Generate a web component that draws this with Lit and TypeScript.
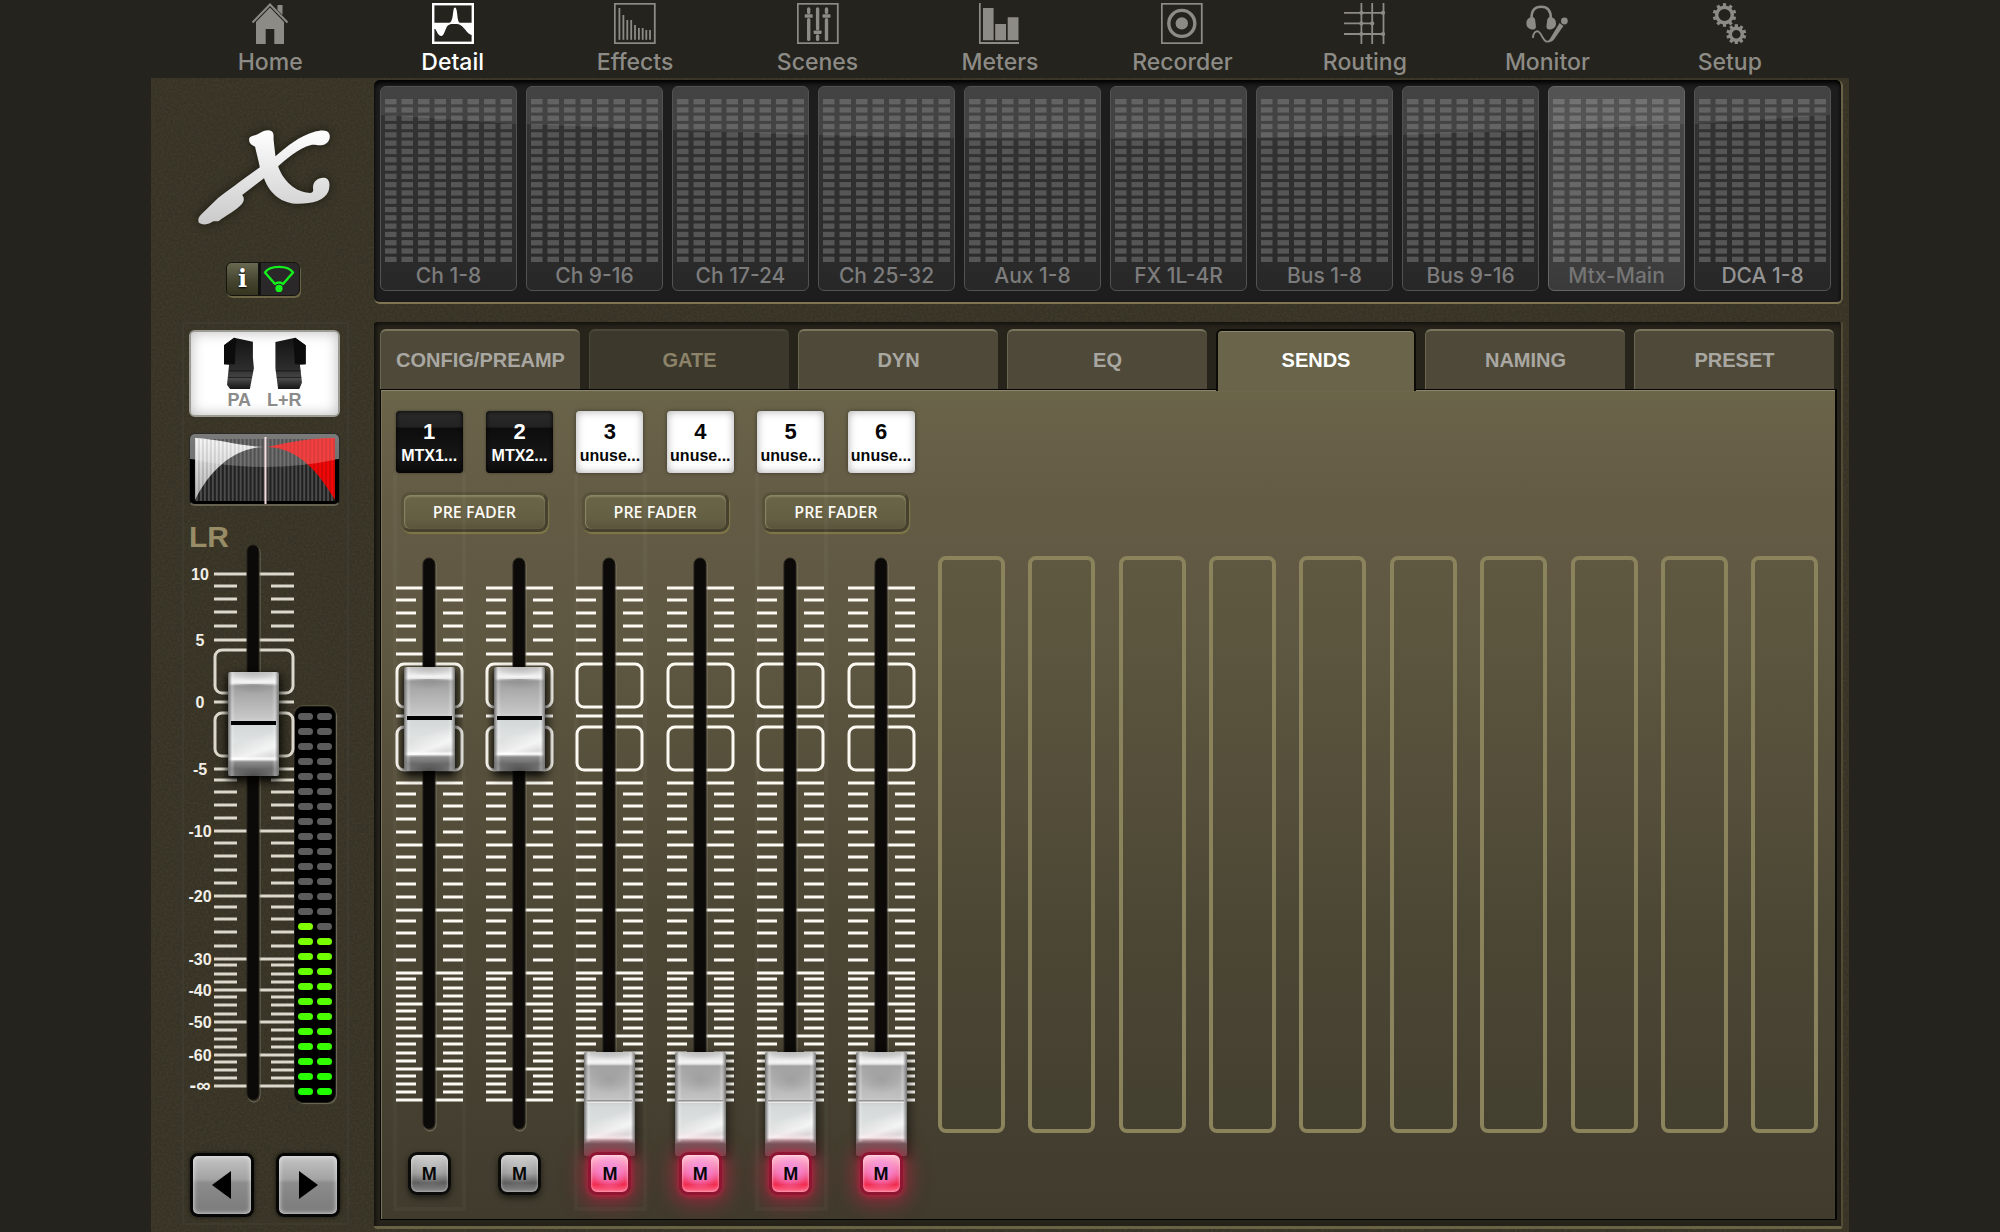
import { LitElement, html, css, svg, nothing } from "lit";
import { customElement, property, state } from "lit/decorators.js";
import { classMap } from "lit/directives/class-map.js";
import { styleMap } from "lit/directives/style-map.js";

/* ---------- data ---------- */

const NAV = ["Home", "Detail", "Effects", "Scenes", "Meters", "Recorder", "Routing", "Monitor", "Setup"];

const BANKS = [
  "Ch 1-8", "Ch 9-16", "Ch 17-24", "Ch 25-32", "Aux 1-8",
  "FX 1L-4R", "Bus 1-8", "Bus 9-16", "Mtx-Main", "DCA 1-8",
];

const TABS = ["CONFIG/PREAMP", "GATE", "DYN", "EQ", "SENDS", "NAMING", "PRESET"];

interface Send {
  id: number;
  name: string;
  dark: boolean;
  level: number;
  muted: boolean;
}

const SENDS: Send[] = [
  { id: 1, name: "MTX1...", dark: true, level: 74.6, muted: false },
  { id: 2, name: "MTX2...", dark: true, level: 74.6, muted: false },
  { id: 3, name: "unuse...", dark: false, level: 0, muted: true },
  { id: 4, name: "unuse...", dark: false, level: 0, muted: true },
  { id: 5, name: "unuse...", dark: false, level: 0, muted: true },
  { id: 6, name: "unuse...", dark: false, level: 0, muted: true },
];

const EMPTY_SLOTS = 10;

/* Scale marks, in pixels below the +10 dB mark. */
const MAJOR: [number, string][] = [
  [0, "10"], [66, "5"], [128, "0"], [195, "-5"], [257, "-10"], [322, "-20"],
  [385, "-30"], [416, "-40"], [448, "-50"], [481, "-60"], [512, "-∞"],
];
const MINOR = [
  12, 25, 38, 52, 206, 218, 231, 244, 269, 282, 296, 309, 333, 345, 358, 372,
  391, 400, 408, 423, 431, 440, 456, 465, 473, 488, 496, 504,
];

/* ---------- icons ---------- */

const gear = (cx: number, cy: number, r: number) => svg`
  <circle cx=${cx} cy=${cy} r=${r} fill="none" stroke="currentColor" stroke-width="3.4"/>
  ${Array.from({ length: 10 }, (_, i) => svg`
    <rect x=${cx - 1.6} y=${cy - r - 4} width="3.2" height="4" fill="currentColor"
      transform="rotate(${i * 36} ${cx} ${cy})"/>`)}
`;

const frame = svg`<rect x="0.8" y="0.8" width="40" height="39.4" fill="none" stroke="currentColor" stroke-width="1.8"/>`;

const ICONS: Record<string, unknown> = {
  Home: svg`
    <path d="M3.5 19.5 21 1.5 38.5 19.5" fill="none" stroke="currentColor" stroke-width="2"/>
    <path d="M28.5 2H33.5V12L28.5 7Z" fill="currentColor"/>
    <path d="M21 4.5 35 19V41H25.3V26H16.7V41H7V19Z" fill="currentColor"/>`,
  Detail: svg`
    <rect x="1.2" y="1.2" width="39.6" height="38.6" fill="none" stroke="currentColor" stroke-width="2.4"/>
    <path d="M2 19.8H17.5C20 19 20.6 14 21.2 9 21.6 6 22 4.6 23 4.6 24.2 4.6 24.8 7 25.2 11 25.8 17 26.4 19.6 28 19.8H40V32C35 31 33 25 29 22.5 27.5 21.4 26 21 23 21 20 21 17 20.5 15 23.5 13 27 12 33 9.2 33 6.4 33 5 29 3.4 26H2Z" fill="currentColor"/>`,
  Effects: svg`${frame}
    ${[[5.4, 5], [9.4, 12], [13.3, 17], [17.2, 17], [21, 22], [24.9, 25], [28.7, 25], [32.3, 27], [36, 27]].map(
      ([x, y]) => svg`<path d="M${x} ${y}V36.8" stroke="currentColor" stroke-width="1.8"/>`)}`,
  Scenes: svg`${frame}
    ${[[11.7, 13], [20.6, 29.3], [29.5, 13]].map(([x, y]) => svg`
      <path d="M${x} 6V${y - 3.6}M${x} ${y + 3.6}V36.4" stroke="currentColor" stroke-width="3.4" stroke-linecap="round"/>
      <rect x=${x - 4} y=${y - 1.8} width="8" height="3.6" rx="0.8" fill="currentColor"/>`)}`,
  Meters: svg`
    <path d="M0.8 0V40H40" fill="none" stroke="currentColor" stroke-width="1.8"/>
    <path d="M4 5H14.6V37.3H4ZM16.2 21H27V37.3H16.2ZM28.7 14.3H39.5V37.3H28.7Z" fill="currentColor"/>`,
  Recorder: svg`${frame}
    <circle cx="20.8" cy="20.4" r="13" fill="none" stroke="currentColor" stroke-width="3.4"/>
    <circle cx="20.8" cy="20.4" r="6.2" fill="currentColor"/>`,
  Routing: svg`
    <path d="M17.4 0V41M28.2 0V41M39.5 0V41M0 9.8H41M0 20.4H30M0 31H41" stroke="currentColor" stroke-width="1.8"/>
    ${[[17.4, 9.8], [39, 9.8], [17.4, 20.4], [28.2, 20.4], [17.4, 31], [39, 31]].map(
      ([x, y]) => svg`<circle cx=${x} cy=${y} r="2.1" fill="currentColor"/>`)}`,
  Monitor: svg`
    <path d="M5.5 15C5.5 7 9 3.8 15.2 3.8 21.4 3.8 24.8 7 24.8 15" fill="none" stroke="currentColor" stroke-width="2.6"/>
    <path d="M7.2 14C2 14 0.4 17 0.4 20.4 0.4 24 3 26.4 7 26.4 9.4 26.4 10.4 25 9.8 22L9 16Z" fill="currentColor"/>
    <path d="M23.2 14C28.4 14 30 17 30 20.4 30 24 27.4 26.4 23.4 26.4 21 26.4 20 25 20.6 22L21.4 16Z" fill="currentColor"/>
    <circle cx="38.4" cy="18" r="3.4" fill="currentColor"/>
    <path d="M33.6 20 37.4 23 28 36.4C26.6 38.4 24.4 39 22 39Z" fill="currentColor"/>
    <path d="M25 37C21 40.6 18.6 38 16.4 34 14 29 11.4 26.6 8.6 29.6 7 31.4 7 33 7 35" fill="none" stroke="currentColor" stroke-width="1.8"/>`,
  Setup: svg`${gear(15.5, 12, 7.8)}${gear(27.3, 31.2, 6)}`,
};

/* Meter block grid used by each layer button. */
const meterGrid = html`
  <svg class="grid" viewBox="0 0 127 163" preserveAspectRatio="none" aria-hidden="true">
    ${Array.from({ length: 160 }, (_, n) => svg`
      <rect x=${(n % 8) * 16.5} y=${Math.floor(n / 8) * 8.3} width="11.5" height="5.3"/>`)}
  </svg>`;

/* ---------- fader ---------- */

@customElement("level-fader")
class LevelFader extends LitElement {
  @property({ type: Number }) level = 0;
  @property() label = "";
  @property({ type: Boolean }) main = false;

  static styles = css`
    :host { display: block; position: relative; }
    svg { display: block; overflow: visible; }
    .mark { stroke: #fbf9f2; stroke-width: 3; fill: none; }
    .mark.soft { stroke: #dcd8cc; }
    .slot { fill: #0b0a08; stroke: #24211a; stroke-width: 1; }
    .edge { fill: none; stroke: #8d8873; stroke-width: 1; opacity: 0.7; }
    .num { font: bold 16px "Liberation Sans", Arial, sans-serif; fill: #f1efe8; text-anchor: middle; }
    .num.inf { font-size: 20px; }
    input {
      position: absolute; right: 8px; top: -22px;
      width: 51px; height: 620px; margin: 0; padding: 0;
      writing-mode: vertical-lr; direction: rtl;
      appearance: none; -webkit-appearance: none; background: none; outline-offset: 2px;
    }
    input.main { right: 15px; top: -23px; }
    input::-webkit-slider-runnable-track { background: none; width: 51px; }
    input::-webkit-slider-thumb {
      appearance: none; -webkit-appearance: none;
      width: 51px; height: 104px; border: 0; border-radius: 2px;
      background:
        linear-gradient(#000, #000) center 49px / 45px 4px no-repeat,
        linear-gradient(90deg, #6d6d6d, #ffffff40 8%, #fff0 14%, #fff0 86%, #ffffff40 92%, #757575) 0 0 / 100% 100% no-repeat,
        radial-gradient(ellipse 24px 10px at 50% 0, #8d8d8dcc, #8d8d8d00) 0 12px / 100% 16px no-repeat,
        radial-gradient(ellipse 26px 9px at 50% 0, #b9b9b9, #b9b9b900) 0 0 / 100% 12px no-repeat,
        radial-gradient(ellipse 22px 9px at 50% 100%, #4c4c4c, #4c4c4c00) 0 92px / 100% 12px no-repeat,
        linear-gradient(160deg, #ffffff00 40%, #ffffffb0 70%, #ffffff10 88%) 0 54px / 100% 34px no-repeat,
        linear-gradient(#c9c9c9 0, #f5f5f5 10px, #dedede 12px, #9c9c9c 14px, #a9a9a9 22px, #c4c4c4 44px, #cfcfcf 50px,
          #d3d8d8 54px, #dfe2e2 70px, #d6d6d6 84px, #fff 87px, #8c8c8c 90px, #6a6a6a 97px, #777 104px);
      box-shadow: 0 6px 10px #000a, 4px 2px 8px #0006, -2px 2px 5px #0005;
    }
    input.low::-webkit-slider-thumb {
      background:
        linear-gradient(#7d7d7d, #fff) center 48px / 45px 3px no-repeat,
        linear-gradient(90deg, #6d6d6d, #ffffff40 8%, #fff0 14%, #fff0 86%, #ffffff40 92%, #757575) 0 0 / 100% 90px no-repeat,
        radial-gradient(ellipse 22px 14px at 50% 40%, #94949499, #94949400) 0 14px / 100% 34px no-repeat,
        radial-gradient(ellipse 26px 8px at 50% 0, #b9b9b9, #b9b9b900) 0 0 / 100% 12px no-repeat,
        linear-gradient(160deg, #ffffff00 40%, #ffffffb0 70%, #ffffff10 88%) 0 52px / 100% 34px no-repeat,
        linear-gradient(#c9c9c9 0, #f5f5f5 10px, #e4e4e4 12px, #a2a2a2 14px, #adadad 24px, #c2c2c2 46px, #cdcdcd 50px,
          #d3d8d8 54px, #dcdfdf 70px, #d8d8d8 82px, #f6eef0 86px, #a18b90 89px, #6b5b5b 92px, #66504f 104px);
      box-shadow: 4px 2px 8px #0006, -2px 2px 5px #0004;
    }
  `;

  render() {
    const main = this.main;
    const left = main ? 25 : 0;
    const width = main ? 105 : 67;
    const height = main ? 556 : 572;
    const top = main ? 29 : 30;
    const short = main ? 23 : 20;
    const slot = main ? 58 : 27;
    const mark = classMap({ mark: true, soft: main });
    return html`
      <svg width=${width} height=${height} viewBox="0 0 ${width} ${height}" aria-hidden="true">
        ${MINOR.map((y) => svg`<path class=${mark}
          d="M${left} ${y + top}h${short}M${width - short} ${y + top}h${short}"/>`)}
        ${MAJOR.map(([y, text]) => svg`
          <path class=${mark} d="M${left} ${y + top}H${width}"/>
          ${main ? svg`<text class=${text === "-∞" ? "num inf" : "num"} x="11" y=${y + top + 6}>${text}</text>` : nothing}`)}
        ${[75, 138].map((y) => svg`<rect class=${mark} x=${left + 1} y=${y + top + 1} width=${width - left - 2}
          height="43" rx="7"/>`)}
        <rect class="edge" x=${slot + 1} y="1" width="12" height=${height} rx="6"/>
        <rect class="slot" x=${slot} y="0" width="12" height=${height - 1} rx="6"/>
      </svg>
      <input type="range" min="0" max="100" step="0.1" .value=${String(this.level)}
        aria-label=${this.label} aria-orientation="vertical"
        class=${classMap({ main, low: this.level < 1 })}>
    `;
  }
}

/* ---------- application ---------- */

@customElement("app-root")
class AppRoot extends LitElement {
  @state() private section = "Detail";
  @state() private bank = "Mtx-Main";
  @state() private tab = "SENDS";
  @state() private sends = SENDS;

  static styles = css`
    :host {
      --sans: "Liberation Sans", Arial, Helvetica, sans-serif;
      --ui: Inter, Roboto, sans-serif;
      --shell: #24231d;
      display: flex; flex-direction: column; box-sizing: border-box;
      min-height: 100vh; padding: 0 151px;
      background: var(--shell); font-family: var(--sans);
    }
    button { font-family: inherit; margin: 0; padding: 0; border: 0; cursor: pointer; }

    .nav { display: grid; grid-template-columns: repeat(9, 1fr); height: 78px; padding: 0 28px; }
    .nav button {
      display: flex; flex-direction: column; align-items: center; gap: 3px;
      padding-top: 3px; background: none; color: #8d8b86;
      font: 500 23px/30px var(--ui);
    }
    .nav button.on { color: #fff; }
    .nav svg { width: 42px; height: 41px; display: block; }

    .console {
      position: relative; flex: 1; display: grid; grid-template-columns: 223px 1fr;
      padding: 0 6px 3px 0; background: #363226;
    }
    .grain { position: absolute; inset: 0; width: 100%; height: 100%; opacity: 0.12; pointer-events: none; }

    /* sidebar */
    .side { position: relative; display: flex; flex-direction: column; align-items: flex-start; padding: 51px 25px 4px 31px; }
    .logo { width: 134px; height: 97px; margin-left: 15px; filter: drop-shadow(0 0 5px #0008); }
    .status {
      display: flex; height: 32px; width: 72px; margin: 36px 0 26px 44px; border: 1px solid #16140f; border-radius: 6px;
      background: #2b2829; box-shadow: 1px 2px 0 #6b6546; overflow: hidden;
    }
    .status button {
      width: 34px; background: linear-gradient(#686950, #43432e 60%, #34341f); color: #fff;
      border-right: 3px solid #111; box-sizing: border-box; font: bold 24px/30px "DejaVu Serif", serif;
      text-shadow: 0 1px 2px #000;
    }
    .status svg { width: 36px; height: 32px; }
    .strip {
      flex: 1; display: flex; flex-direction: column; align-self: stretch; padding: 6px 7px 6px 5px;
      border: 2px solid #3e3a2d; border-radius: 3px;
    }
    .badge {
      height: 83px; border: 2px solid #9b9b93; border-radius: 6px; display: flex; flex-direction: column; align-items: center;
      background: #fff; box-shadow: inset 0 0 14px #bbb; color: #8b8b8b; font: bold 18px/20px var(--sans);
    }
    .badge svg { width: 82px; height: 53px; margin-top: 5px; }
    .badge .names { display: flex; gap: 16px; }
    .curve {
      height: 70px; margin-top: 16px; border: 1px solid #2a2a28; border-bottom: 2px solid #666250; border-radius: 6px;
      background: linear-gradient(#555 0, #4a4a4a 25px, #000 25px); overflow: hidden;
    }
    .curve svg { display: block; width: 100%; height: 100%; }
    .bus { color: #978c66; font: bold 30px/16px var(--sans); margin: 23px 0 0; }
    .levels { display: flex; align-items: flex-end; }
    .levels level-fader { width: 105px; height: 558px; }
    .vu {
      width: 42px; height: 397px; box-sizing: border-box; border-radius: 9px; background: #000;
      border: 1px solid #1b1914; box-shadow: 1px 1px 1px #6f6b58, 0 -1px 1px #55513f;
      display: grid; grid-template-columns: 15px 15px; gap: 8px 4px; justify-content: center; align-content: start; padding-top: 6px;
    }
    .vu i { height: 7px; border-radius: 4px; background: #5c5c5c; }
    .vu i.lit { background: var(--lit); }
    .pager { display: flex; justify-content: space-between; margin-top: auto; padding-left: 1px; }
    .pager button {
      width: 64px; height: 64px; border: 3px solid #060606; border-radius: 8px;
      background: linear-gradient(#c4c4c4, #a3a3a3 40%, #8c8c8c 46%, #7a7a7a);
      box-shadow: inset 0 0 5px #eee, 0 0 4px #0009;
    }
    .pager svg { display: block; margin: auto; width: 30px; height: 30px; }

    /* layer buttons */
    .work { position: relative; display: flex; flex-direction: column; padding-top: 2px; gap: 18px; min-width: 0; }
    .banks {
      display: grid; grid-template-columns: repeat(10, 1fr); gap: 9px; padding: 6px 10px 11px 6px;
      background: #1d1d1d; border-radius: 6px; border-right: 2px solid #6a6347; border-bottom: 2px solid #7f7552;
      box-shadow: inset 0 3px 4px #000;
    }
    .banks button {
      position: relative; box-sizing: border-box; height: 205px; padding: 12px 4px 0; border: 1px solid #525252;
      border-radius: 6px; background: linear-gradient(#343434, #2e2e2e 70%, #272727);
      color: #7c7c7c; font: 500 21px/28px var(--ui); overflow: hidden; white-space: nowrap;
    }
    .banks button:last-child { color: #949494; }
    .banks button.on { background: linear-gradient(#464646, #444 60%, #3a3a3a); border-color: #666; color: #757575; }
    .grid { display: block; width: 100%; height: 163px; fill: #565656; }
    .on .grid { fill: #676767; }
    .gloss { position: absolute; inset: 0; background: linear-gradient(#ffffff12, #ffffff16 50px); pointer-events: none; }

    /* channel editor */
    .editor {
      flex: 1; display: flex; flex-direction: column; padding: 7px 4px 6px 6px; background: #26241b;
      border-right: 2px solid #524c37; border-bottom: 3px solid #6a6245; border-radius: 3px;
      box-shadow: inset 2px 2px 4px #0009;
    }
    .tabs { display: grid; grid-template-columns: repeat(7, 1fr); gap: 9px; height: 60px; padding-right: 3px; }
    .tabs button {
      background: #4f4939; color: #a9a7a1; border-radius: 6px 6px 0 0; border-top: 2px solid #7a765e; border-left: 1px solid #6a664f;
      font: bold 20px/58px var(--sans);
    }
    .tabs button.off { background: #3c382b; color: #8b836a; border-color: #4b4737; }
    .tabs button.on {
      position: relative; background: #69644a; color: #fff; margin-bottom: -2px; padding-bottom: 2px;
      border: 2px solid #0b0a07; border-bottom: 0; box-shadow: inset 0 1px 0 #8d886c;
    }
    .sends {
      flex: 1; display: grid; grid-template-columns: repeat(16, 1fr); padding: 21px 5px 23px 3px;
      border: 1px solid #050504; border-right-width: 2px;
      background: linear-gradient(#6a6449, #655c46 12%, #5d5640 32%, #4c4735 65%, #403b2d);
      box-shadow: inset 0 2px 1px -1px #8f8a6e, inset 1px 0 0 #7a7459;
    }
    .pair { position: relative; grid-column: span 2; display: flex; flex-direction: column; align-items: center; }
    .pair::before {
      content: ""; position: absolute; left: 9px; width: 73px; top: 62px; bottom: -15px;
      border: 4px solid #ffffff08; border-top: 0; box-sizing: border-box; pointer-events: none;
    }
    .row { position: relative; align-self: stretch; display: grid; grid-template-columns: 1fr 1fr; justify-items: center; }
    .name {
      width: 67px; height: 62px; box-sizing: border-box; padding-top: 9px; border-radius: 4px; text-align: center;
      background: #fff; color: #060606; box-shadow: inset 0 0 9px #aaa, 0 0 4px #0006;
      font: bold 16px/24px var(--sans); white-space: nowrap;
    }
    .name b { display: block; font-size: 22px; line-height: 24px; }
    .name.dark { background: linear-gradient(#2a2a2a, #222 16px, #0d0d0d 17px, #161616 45px, #0a0a0a); color: #fff; box-shadow: inset 0 0 4px #000, 0 0 3px #0006; }
    .pre {
      width: 147px; height: 40px; margin: 19px 0 26px; border-radius: 9px; color: #fbfaf4;
      background: linear-gradient(#6b6548, #645e43 70%, #5a543c); border: 3px solid #47422f;
      border-top-color: #575239; border-left-color: #575239;
      box-shadow: 1px 2px 1px #807849, inset 0 2px 2px #8b8664, inset 1px 0 1px #8b8664;
      font: 600 16px/32px "Open Sans", "Noto Sans", sans-serif;
    }
    .row level-fader { width: 67px; height: 572px; }
    .mutes { margin-top: 22px; }
    .mute {
      position: relative; width: 43px; height: 43px; border: 3px solid #0b0b0a; border-radius: 9px; color: #080808;
      background: radial-gradient(circle at 50% 40%, #fff3, #fff0 60%), linear-gradient(#cfcfcf, #9a9a9a 50%, #5f5f5f 75%, #8a8a8a);
      box-shadow: 0 3px 6px #0008, inset 0 0 3px #fff9; font: bold 18px/36px var(--sans);
    }
    .mute.on {
      border-color: #8f1533;
      background: radial-gradient(circle at 50% 45%, #f48fe8, #f48fe800 65%), linear-gradient(#ffc4d8, #f56aa0 50%, #f02c50 80%, #ff6d8d);
      box-shadow: 0 2px 20px 6px #d81c4580, 0 1px 5px 1px #d01a4499, inset 0 0 3px #fffa;
    }
    .empty { width: 67px; box-sizing: border-box; margin: 145px auto 63px; border: 4px solid #8b835c; border-radius: 8px; background: #4c473014; }
  `;

  private toggleMute(id: number) {
    this.sends = this.sends.map((s) => (s.id === id ? { ...s, muted: !s.muted } : s));
  }

  /* The glass highlight is one wide arc; each button shows its own section of it. */
  private glossClip(i: number) {
    const y = (x: number) => Math.round(52 - 24 * ((x - 5) / 5) ** 2);
    return { clipPath: `polygon(0 0, 100% 0, 100% ${y(i + 1)}px, 0 ${y(i)}px)` };
  }

  private renderSide() {
    return html`
      <aside class="side">
        <svg class="logo" viewBox="150 384 350 292" preserveAspectRatio="none" role="img" aria-label="X">
          <defs><linearGradient id="chrome" x1="0" y1="0" x2="0" y2="1">
            <stop offset="0" stop-color="#fff"/><stop offset="1" stop-color="#c9c9c9"/></linearGradient></defs>
          <path fill="url(#chrome)" d="M286 416C286 403 300 406 313 397C325 388 337 385 345 391C351 396 350 404 350 416L355 466C385 435 420 404 455 393C475 387 492 386 496 400C500 416 490 431 474 433C464 434 458 430 448 432C415 441 380 478 362 496C372 530 398 570 440 576C450 578 455 574 453 562C452 541 468 528 484 531C498 535 498 556 493 572C484 598 452 609 415 609C372 609 340 580 325 532L268 583C276 594 272 606 262 616C245 634 222 648 208 660C202 664 198 660 190 663C180 671 166 674 157 668C150 661 154 648 162 640L205 592C240 560 285 524 314 499C311 478 304 452 302 438C296 432 286 430 286 416Z"/>
        </svg>
        <div class="status">
          <button aria-label="Information">i</button>
          <svg viewBox="0 0 36 32" role="img" aria-label="Connected" fill="none" stroke="#14f01c" stroke-width="2.4">
            <path d="M14 21 4 9.5C9 2 27 2 32 9.5L22 21C20 19 16 19 14 21Z" stroke-linejoin="round"/>
            <circle cx="18" cy="25.4" r="3.6" fill="#14f01c" stroke="none"/>
          </svg>
        </div>
        <section class="strip">
          <div class="badge">
            <svg viewBox="222 78 244 160" preserveAspectRatio="none" aria-hidden="true">
              <defs><linearGradient id="spk" x1="0" y1="0" x2="0" y2="1">
                <stop offset="0" stop-color="#141414"/><stop offset="0.6" stop-color="#2c2c2c"/>
                <stop offset="0.8" stop-color="#4a4a4a"/><stop offset="1" stop-color="#151515"/></linearGradient></defs>
              <path fill="url(#spk)" d="M252 80 308 92V140L311 172 299 235H240L231 222 237 162 222 160V103Z"/>
              <path fill="#0c0c0c" d="M252 80 258 84 254 160H222V103Z"/>
              <path fill="url(#spk)" d="M434 80 375 93V172L383 235H446L454 215 448 162 465 160V103Z"/>
              <path fill="#0c0c0c" d="M434 80 428 84 433 160H465V103Z"/>
              <path stroke="#0a0a0a" stroke-width="2" d="M237 180H308M235 200H304M376 180H450M379 200H452"/>
            </svg>
            <div class="names"><span>PA</span><span>L+R</span></div>
          </div>
          <div class="curve">
            <svg viewBox="0 0 150 70" preserveAspectRatio="none" role="img" aria-label="Pan">
              <defs>
                <pattern id="bars" width="4" height="70" patternUnits="userSpaceOnUse"><rect width="2" height="70" fill="#000" opacity="0.5"/></pattern>
                <linearGradient id="wh" x1="0" y1="0" x2="0" y2="1"><stop offset="0" stop-color="#f4f4f4"/><stop offset="1" stop-color="#b5b5b5"/></linearGradient>
              </defs>
              <rect x="5" y="5" width="141" height="62" fill="#4b4b4b"/>
              <rect x="5" y="5" width="141" height="62" fill="url(#bars)"/>
              <path d="M5 4V66C20 36 44 14 74 13C50 12 28 5 5 4Z" fill="url(#wh)"/>
              <path d="M146 4V66C128 36 108 14 78 13C100 8 120 4 146 4Z" fill="#f20808"/>
              <rect x="5" y="5" width="141" height="62" fill="url(#bars)" opacity="0.28"/>
              <path d="M0 0H150V25Q75 41 0 25Z" fill="#fff" opacity="0.22"/>
              <path d="M76 3V70" stroke="#f6dfe2" stroke-width="2"/>
            </svg>
          </div>
          <h2 class="bus">LR</h2>
          <div class="levels">
            <level-fader main label="LR level" .level=${70.9}></level-fader>
            <div class="vu" role="meter" aria-label="LR output" aria-valuenow="12" aria-valuemin="0" aria-valuemax="26">
              ${Array.from({ length: 52 }, (_, n) => {
                const row = n >> 1;
                const lit = row >= 14 + (n % 2);
                return html`<i class=${classMap({ lit })}
                  style=${lit ? styleMap({ "--lit": `rgb(${130 - (row - 14) * 9}, 255, 0)` }) : nothing}></i>`;
              })}
            </div>
          </div>
          <div class="pager">
            <button aria-label="Previous channel"><svg viewBox="0 0 30 30"><path d="M5 15 24 1V29Z" fill="#000"/></svg></button>
            <button aria-label="Next channel"><svg viewBox="0 0 30 30"><path d="M25 15 6 1V29Z" fill="#000"/></svg></button>
          </div>
        </section>
      </aside>`;
  }

  private renderPair(a: Send, b: Send) {
    const both = [a, b];
    return html`
      <div class="pair">
        <div class="row">
          ${both.map((s) => html`<div class=${classMap({ name: true, dark: s.dark })}><b>${s.id}</b>${s.name}</div>`)}
        </div>
        <button class="pre">PRE FADER</button>
        <div class="row">
          ${both.map((s) => html`<level-fader .level=${s.level} label="Send ${s.id} level"></level-fader>`)}
        </div>
        <div class="row mutes">
          ${both.map((s) => html`
            <button class=${classMap({ mute: true, on: s.muted })} aria-label="M, mute send ${s.id}"
              aria-pressed=${s.muted} @click=${() => this.toggleMute(s.id)}>M</button>`)}
        </div>
      </div>`;
  }

  render() {
    const s = this.sends;
    return html`
      <nav class="nav">
        ${NAV.map((n) => html`
          <button class=${classMap({ on: n === this.section })} @click=${() => (this.section = n)}>
            <svg viewBox="0 0 42 41" aria-hidden="true">${ICONS[n]}</svg><span>${n}</span>
          </button>`)}
      </nav>
      <main class="console">
        <svg class="grain" aria-hidden="true">
          <filter id="noise"><feTurbulence type="fractalNoise" baseFrequency="0.45" numOctaves="2"/>
            <feColorMatrix values="0 0 0 0 0.25  0 0 0 0 0.2  0 0 0 0 0.05  2 0 0 0 -0.6"/></filter>
          <rect width="100%" height="100%" filter="url(#noise)"/>
        </svg>
        ${this.renderSide()}
        <div class="work">
          <div class="banks">
            ${BANKS.map((b, i) => html`
              <button class=${classMap({ on: b === this.bank })} @click=${() => (this.bank = b)}>
                ${meterGrid}<span>${b}</span>
                <span class="gloss" style=${styleMap(this.glossClip(i))}></span>
              </button>`)}
          </div>
          <section class="editor">
            <div class="tabs" role="tablist">
              ${TABS.map((t) => html`
                <button role="tab" aria-selected=${t === this.tab} @click=${() => (this.tab = t)}
                  class=${classMap({ on: t === this.tab, off: t === "GATE" })}>${t}</button>`)}
            </div>
            <div class="sends" role="tabpanel">
              ${[0, 2, 4].map((i) => this.renderPair(s[i], s[i + 1]))}
              ${Array.from({ length: EMPTY_SLOTS }, () => html`<div class="empty"></div>`)}
            </div>
          </section>
        </div>
      </main>`;
  }
}
